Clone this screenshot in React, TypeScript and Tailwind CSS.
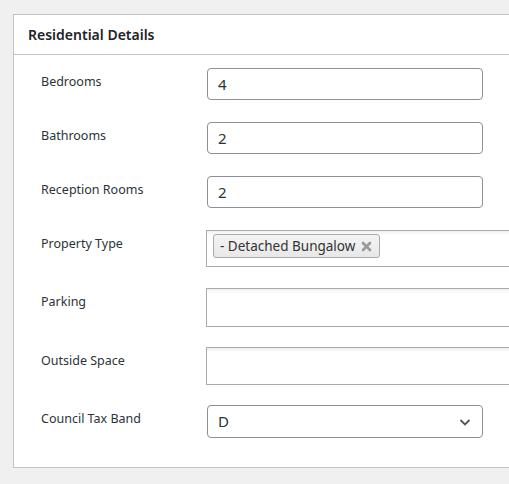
import React from "react";

const font = { fontFamily: '"Noto Sans", "Open Sans", sans-serif' };

function Label({ children }: { children: React.ReactNode }) {
  return (
    <div className="w-[193px] shrink-0 pl-[27px] pt-[4px] text-[12.5px] leading-[20px] text-[#2c3338]">
      {children}
    </div>
  );
}

function TextInput({ value }: { value: string }) {
  return (
    <div className="w-[276px] h-[32px] border border-[#8c8f94] rounded-[4px] bg-white flex items-center px-[10px] text-[15px] text-[#2c3338]">
      {value}
    </div>
  );
}

function Select2Box({ h, children }: { h: string; children?: React.ReactNode }) {
  return (
    <div
      className={`w-[400px] ${h} border border-[#aaaaaa] bg-white bg-gradient-to-b from-[#eeeeee] via-white to-white bg-[length:100%_8px] bg-no-repeat`}
    >
      {children}
    </div>
  );
}

export default function App() {
  return (
    <div className="w-[509px] h-[484px] bg-[#f0f0f1] overflow-hidden pt-[14px] pl-[13px]" style={font}>
      <div className="w-[600px] h-[454px] bg-white border border-[#c3c4c7] border-r-0">
        <div className="h-[40px] border-b border-[#c3c4c7] flex items-center pl-[14px] text-[14px] font-semibold text-[#1d2327]">
          Residential Details
        </div>
        <div className="pt-[13px] flex flex-col">
          <div className="flex">
            <Label>Bedrooms</Label>
            <TextInput value="4" />
          </div>
          <div className="flex mt-[22px]">
            <Label>Bathrooms</Label>
            <TextInput value="2" />
          </div>
          <div className="flex mt-[22px]">
            <Label>Reception Rooms</Label>
            <TextInput value="2" />
          </div>
          <div className="flex mt-[22px]">
            <Label>Property Type</Label>
            <div className="-ml-[1px]">
              <Select2Box h="h-[37px]">
                <div className="pt-[3px] pl-[6px] flex">
                  <div className="h-[24px] flex items-center gap-[6px] pl-[6px] pr-[7px] border border-[#aaaaaa] rounded-[3px] bg-gradient-to-b from-[#f4f4f4] to-[#e8e8e8] text-[13.5px] text-[#333333]">
                    <span>- Detached Bungalow</span>
                    <svg width="11" height="11" viewBox="0 0 11 11" className="mt-[1px]">
                      <path d="M2 2 L9 9 M9 2 L2 9" stroke="#999999" strokeWidth="2.6" strokeLinecap="round" />
                    </svg>
                  </div>
                </div>
              </Select2Box>
            </div>
          </div>
          <div className="flex mt-[21px]">
            <Label>Parking</Label>
            <div className="-ml-[1px]">
              <Select2Box h="h-[39px]" />
            </div>
          </div>
          <div className="flex mt-[20px]">
            <Label>Outside Space</Label>
            <div className="-ml-[1px]">
              <Select2Box h="h-[38px]" />
            </div>
          </div>
          <div className="flex mt-[20px]">
            <Label>Council Tax Band</Label>
            <div className="w-[276px] h-[33px] border border-[#8c8f94] rounded-[4px] bg-white flex items-center justify-between pl-[10px] pr-[10px] text-[15px] text-[#2c3338]">
              <span>D</span>
              <svg width="14" height="14" viewBox="0 0 14 14">
                <path d="M2.5 5 L7 9.5 L11.5 5" fill="none" stroke="#50575e" strokeWidth="1.8" />
              </svg>
            </div>
          </div>
        </div>
      </div>
    </div>
  );
}
